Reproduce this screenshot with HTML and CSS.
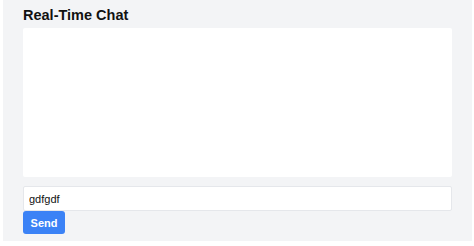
FILE: index.html
```html
<!DOCTYPE html>
<html>
<head>
<meta charset="utf-8">
<link rel="stylesheet" href="styles.css">
</head>
<body>
<div class="app">
  <h1 class="title">Real-Time Chat</h1>
  <div class="messages"></div>
  <input class="msg-input" type="text" value="gdfgdf">
  <button class="send">Send</button>
</div>
</body>
</html>
```
FILE: styles.css
```css
html, body {
  margin: 0;
  padding: 0;
  background: #ffffff;
}
body {
  font-family: "Liberation Sans", Arial, sans-serif;
}
.app {
  margin: 0 2px 0 3px;
  height: 241px;
  box-sizing: border-box;
  background: #f3f4f6;
  padding: 5px 20px 0 20px;
  display: flex;
  flex-direction: column;
  align-items: flex-start;
}
.title {
  margin: 0;
  font-size: 14.5px;
  line-height: 20px;
  font-weight: 700;
  color: #111111;
  height: 23px;
}
.messages {
  align-self: stretch;
  height: 149px;
  background: #ffffff;
  border-radius: 2px;
}
.msg-input {
  align-self: stretch;
  margin: 9px 0 0 0;
  height: 25px;
  box-sizing: border-box;
  border: 1px solid #e5e7eb;
  border-radius: 2px;
  background: #ffffff;
  padding: 0 5px;
  font-family: "Liberation Sans", Arial, sans-serif;
  font-size: 11px;
  color: #111111;
  outline: none;
}
.send {
  height: 23px;
  width: 42px;
  border: none;
  border-radius: 3px;
  background: #3b82f6;
  color: #ffffff;
  font-family: "Liberation Sans", Arial, sans-serif;
  font-weight: 700;
  font-size: 11px;
  padding: 0;
  margin: 0;
}
```
